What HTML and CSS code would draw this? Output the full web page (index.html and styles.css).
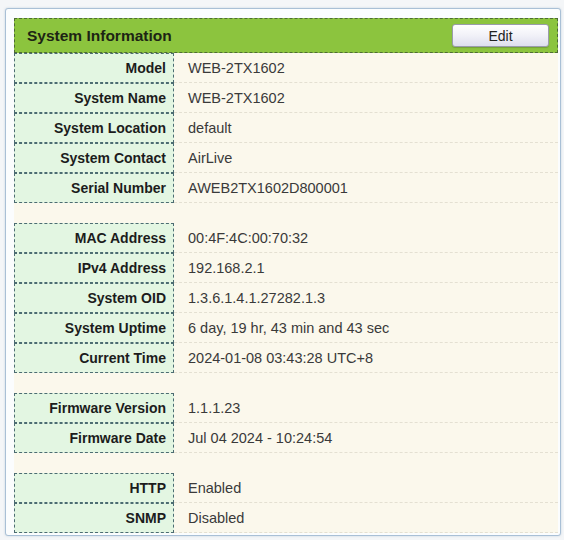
FILE: index.html
```html
<!DOCTYPE html>
<html>
<head>
<meta charset="utf-8">
<link rel="stylesheet" href="styles.css">
</head>
<body>
<div class="frame">
  <div class="panel">
    <div class="header">
      <span class="title">System Information</span>
      <button class="edit">Edit</button>
    </div>
    <div class="group">
      <div class="label">Model</div><div class="value">WEB-2TX1602</div>
      <div class="label">System Name</div><div class="value">WEB-2TX1602</div>
      <div class="label">System Location</div><div class="value">default</div>
      <div class="label">System Contact</div><div class="value">AirLive</div>
      <div class="label">Serial Number</div><div class="value">AWEB2TX1602D800001</div>
    </div>
    <div class="group">
      <div class="label">MAC Address</div><div class="value">00:4F:4C:00:70:32</div>
      <div class="label">IPv4 Address</div><div class="value">192.168.2.1</div>
      <div class="label">System OID</div><div class="value">1.3.6.1.4.1.27282.1.3</div>
      <div class="label">System Uptime</div><div class="value">6 day, 19 hr, 43 min and 43 sec</div>
      <div class="label">Current Time</div><div class="value">2024-01-08 03:43:28 UTC+8</div>
    </div>
    <div class="group">
      <div class="label">Firmware Version</div><div class="value">1.1.1.23</div>
      <div class="label">Firmware Date</div><div class="value">Jul 04 2024 - 10:24:54</div>
    </div>
    <div class="group">
      <div class="label">HTTP</div><div class="value">Enabled</div>
      <div class="label">SNMP</div><div class="value">Disabled</div>
    </div>
  </div>
</div>
</body>
</html>
```

FILE: styles.css
```css
html, body {
  margin: 0;
  padding: 0;
  background: #f4f6f8;
  font-family: "Liberation Sans", Arial, sans-serif;
}
.frame {
  margin: 8px 3px 3px 5px;
  border: 1px solid #a9c0d6;
  border-radius: 3px;
  padding: 9px 2px 2px 8px;
  background: #fbfdfe;
  box-shadow: 0 0 2px rgba(140, 165, 190, 0.5);
}
.panel {
  background: #fbf8ec;
}
.header {
  height: 35px;
  box-sizing: border-box;
  border: 1px dashed #4e6b35;
  background: #8cc43e;
  display: flex;
  align-items: center;
  justify-content: space-between;
  padding: 0 8px 0 12px;
}
.title {
  font-weight: bold;
  font-size: 15.5px;
  color: #1d2414;
}
.edit {
  width: 97px;
  height: 23px;
  border: 1px solid #9a9cab;
  border-radius: 3px;
  background: linear-gradient(#ffffff, #f1f1f8 50%, #dedfee);
  font-family: "Liberation Sans", Arial, sans-serif;
  font-size: 14px;
  color: #222;
  padding: 0;
  box-shadow: 0 1px 1px rgba(60, 80, 40, 0.3);
}
.group {
  display: grid;
  grid-template-columns: 160px 1fr;
  grid-auto-rows: 30px;
}
.group + .group {
  margin-top: 20px;
}
.label {
  box-sizing: border-box;
  border: 1px dashed #4c6c72;
  background: #e3f6e2;
  font-weight: bold;
  font-size: 14px;
  color: #1c1c1c;
  text-align: right;
  padding-right: 7px;
  display: flex;
  align-items: center;
  justify-content: flex-end;
}
.value {
  box-sizing: border-box;
  border-bottom: 1px dashed #e4e0d2;
  font-size: 14.5px;
  color: #3a3a3a;
  padding-left: 14px;
  display: flex;
  align-items: center;
}
```
